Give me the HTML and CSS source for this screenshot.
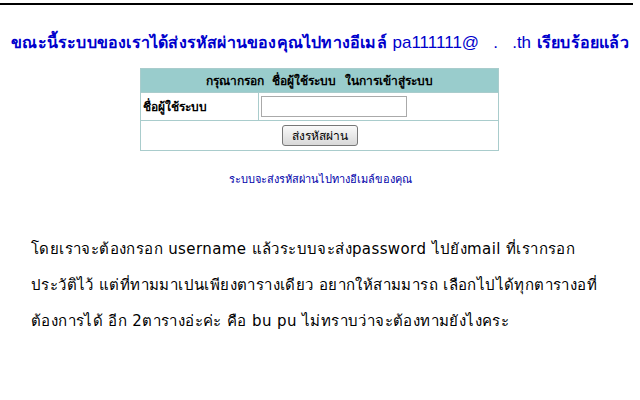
FILE: index.html
```html
<!DOCTYPE html>
<html lang="th">
<head>
<meta charset="utf-8">
<link rel="stylesheet" href="styles.css">
</head>
<body>
<div class="topline"></div>
<h1 class="notice">ขณะนี้ระบบของเราได้ส่งรหัสผ่านของคุณไปทางอีเมล์ <span class="latin">pa111111@ &nbsp; . &nbsp; .th</span> เรียบร้อยแล้ว</h1>
<table class="form">
  <tr><th colspan="2" class="head">กรุณากรอก&nbsp; ชื่อผู้ใช้ระบบ&nbsp; ในการเข้าสู่ระบบ</th></tr>
  <tr>
    <td class="label">ชื่อผู้ใช้ระบบ</td>
    <td class="field"><input class="input" type="text"></td>
  </tr>
  <tr><td colspan="2" class="actions"><button class="btn">ส่งรหัสผ่าน</button></td></tr>
</table>
<p class="hint">ระบบจะส่งรหัสผ่านไปทางอีเมล์ของคุณ</p>
<div class="question">
  <p>โดยเราจะต้องกรอก username แล้วระบบจะส่งpassword ไปยังmail ที่เรากรอก</p>
  <p>ประวัติไว้ แต่ที่ทามมาเปนเพียงตารางเดียว อยากให้สามมารถ เลือกไปได้ทุกตารางอที่</p>
  <p>ต้องการได้ อีก 2ตารางอ่ะค่ะ คือ bu pu ไม่ทราบว่าจะต้องทามยังไงคระ</p>
</div>
</body>
</html>
```
FILE: styles.css
```css
html, body { margin: 0; padding: 0; background: #fff; }
body { font-family: Tahoma, "DejaVu Sans", sans-serif; color: #000; }
.topline { height: 2px; background: #000; margin: 3px 7px 0 0; }
.notice {
  margin: 25px 0 0 0;
  font-size: 16px;
  font-weight: bold;
  color: #0000cc;
  text-align: center;
  white-space: nowrap;
  letter-spacing: 0.2px;
}
.latin { font-family: "Liberation Sans", sans-serif; font-weight: normal; font-size: 17px; letter-spacing: 0; }
.form {
  margin: 13px 0 0 140px;
  width: 359px;
  border-collapse: collapse;
  border: 1px solid #a9cccc;
}
.form td, .form th { border: 1px solid #a9cccc; padding: 0; }
.head {
  background: #99cccc;
  height: 23px;
  font-size: 12px;
  font-weight: bold;
  text-align: center;
}
.label {
  width: 115px;
  height: 27px;
  font-size: 12px;
  font-weight: bold;
  padding-left: 2px !important;
}
.field { padding-left: 2px !important; }
.input {
  width: 142px;
  height: 17px;
  border: 1px solid #aaa;
  padding: 1px;
  margin: 0;
  display: block;
}
.actions { text-align: center; height: 29px; }
.btn {
  font-family: Tahoma, "DejaVu Sans", sans-serif;
  font-size: 12px;
  width: 76px;
  height: 21px;
  border: 1px solid #777;
  border-radius: 3px;
  background: linear-gradient(#fafafa, #d8d8d8);
  padding: 0;
}
.hint {
  margin: 19px 0 0 0;
  text-align: center;
  font-size: 11px;
  color: #0000aa;
}
.question { margin: 43px 0 0 31px; font-size: 15px; letter-spacing: 0.4px; }
.question p { margin: 0; line-height: 36px; white-space: nowrap; }
```
